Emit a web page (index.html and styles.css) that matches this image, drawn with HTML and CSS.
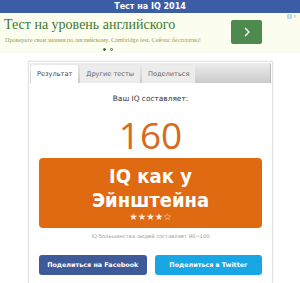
FILE: index.html
```html
<!DOCTYPE html>
<html lang="ru">
<head>
<meta charset="utf-8">
<title>Тест на IQ 2014</title>
<link rel="stylesheet" href="styles.css">
</head>
<body>
<header class="topbar">Тест на IQ 2014</header>
<section class="ad">
  <div class="ad-text">
    <div class="ad-title">Тест на уровень английского</div>
    <div class="ad-sub">Проверьте свои знания по английскому. Cambridge test. Сейчас бесплатно!</div>
    <div class="ad-dots"><span class="dot on"></span><span class="dot"></span></div>
  </div>
  <div class="ad-btn">
    <svg width="10" height="12" viewBox="0 0 10 12"><path d="M3 2 L7 6 L3 10" fill="none" stroke="#fff" stroke-width="1.4"/></svg>
  </div>
  <div class="ad-choice"><span class="ad-i">i</span><span class="ad-x">✕</span></div>
</section>
<main class="card">
  <nav class="tabs">
    <span class="tab active">Результат</span>
    <span class="tab">Другие тесты</span>
    <span class="tab">Поделиться</span>
  </nav>
  <div class="content">
    <p class="label">Ваш IQ составляет:</p>
    <div class="score">160</div>
    <div class="verdict">
      <div class="verdict-text">IQ как у<br>Эйнштейна</div>
      <div class="stars">★★★★☆</div>
    </div>
    <p class="note">IQ большинства людей составляет 90~100</p>
    <div class="share">
      <a class="btn fb">Поделиться на Facebook</a>
      <a class="btn tw">Поделиться в Twitter</a>
    </div>
  </div>
</main>
</body>
</html>
```
FILE: styles.css
```css
html, body { margin: 0; padding: 0; background: #fff; }
body { width: 300px; height: 283px; overflow: hidden; font-family: "DejaVu Sans", Verdana, sans-serif; }

.topbar {
  height: 13px;
  line-height: 13px;
  background: #3c5da6;
  color: #fff;
  font-weight: bold;
  font-size: 8px;
  text-align: center;
}

.ad {
  position: relative;
  height: 40px;
  background: #fbfdee;
  display: flex;
}
.ad-text { flex: 1; padding-left: 4px; }
.ad-title {
  font-family: "Liberation Serif", "DejaVu Serif", serif;
  font-size: 14px;
  color: #3e7a33;
  line-height: 18px;
  margin-top: 3px;
}
.ad-sub {
  font-family: "Liberation Serif", "DejaVu Serif", serif;
  font-size: 6.2px;
  color: #a3a04a;
  line-height: 9px;
  margin-top: 1px;
  padding-left: 1px;
}
.ad-dots { display: flex; gap: 4px; padding-left: 99px; margin-top: 4px; }
.dot { width: 3px; height: 3px; border-radius: 50%; border: 0.8px solid #3b6b3a; box-sizing: border-box; }
.dot.on { background: #2f5a30; }
.ad-btn {
  width: 31px; height: 24px; margin: 7px 38px 0 0;
  background: #4c8a4e; border-radius: 2px;
  display: flex; align-items: center; justify-content: center;
}
.ad-choice {
  position: absolute; right: 3px; top: 1px;
  display: flex; gap: 1px; font-size: 5px; color: #6aa8cc;
}
.ad-i { background: #b9d8ea; color: #fff; width: 5px; height: 5px; line-height: 5px; text-align: center; border-radius: 1px; }
.ad-x { color: #9cc3da; line-height: 5px; }

.card {
  margin: 8px 27px 0 28px;
  border: 1px solid #e2e2e2;
  border-bottom: 0;
  box-shadow: 0 0 2px rgba(0,0,0,0.08);
  padding: 1px 1px 0;
  background: #fff;
  height: 220px;
}
.tabs {
  display: flex;
  gap: 2px;
  padding: 2px 0 0 1px;
  height: 18px;
  background: linear-gradient(#ececec, #cbcbcb);
  border-right: 1px solid #b8b8b8;
  border-radius: 2px 2px 0 0;
}
.tab {
  height: 18px;
  line-height: 18px;
  box-sizing: border-box;
  padding: 0 6px;
  font-size: 6.6px;
  color: #666;
  background: #ececec;
  border-radius: 2px 2px 0 0;
}
.tab.active { background: #fff; color: #444; }

.content { text-align: center; padding: 0 9px; }
.label { margin: 11px 0 0; font-size: 7.4px; line-height: 10px; color: #333; }
.score {
  margin-top: 12px;
  font-family: "Open Sans", sans-serif;
  font-size: 37px;
  line-height: 37px;
  color: #d76a1c;
}
.verdict {
  margin-top: 5px;
  background: #e06a11;
  border-radius: 4px;
  padding: 6px 0 6px;
  color: #fff;
}
.verdict-text { font-weight: bold; font-size: 20px; line-height: 24px; font-stretch: condensed; }
.stars { font-size: 9.5px; line-height: 10px; color: #fbe9dc; }
.note { margin: 4px 0 0; font-size: 5.2px; line-height: 9px; color: #999; }
.share { display: flex; gap: 8px; margin-top: 14px; }
.btn {
  flex: 1;
  height: 20px;
  line-height: 20px;
  border-radius: 3px;
  color: #fff;
  font-weight: bold;
  font-size: 6.4px;
}
.btn.fb { background: #3e5a99; }
.btn.tw { background: #19a6e4; }
```
